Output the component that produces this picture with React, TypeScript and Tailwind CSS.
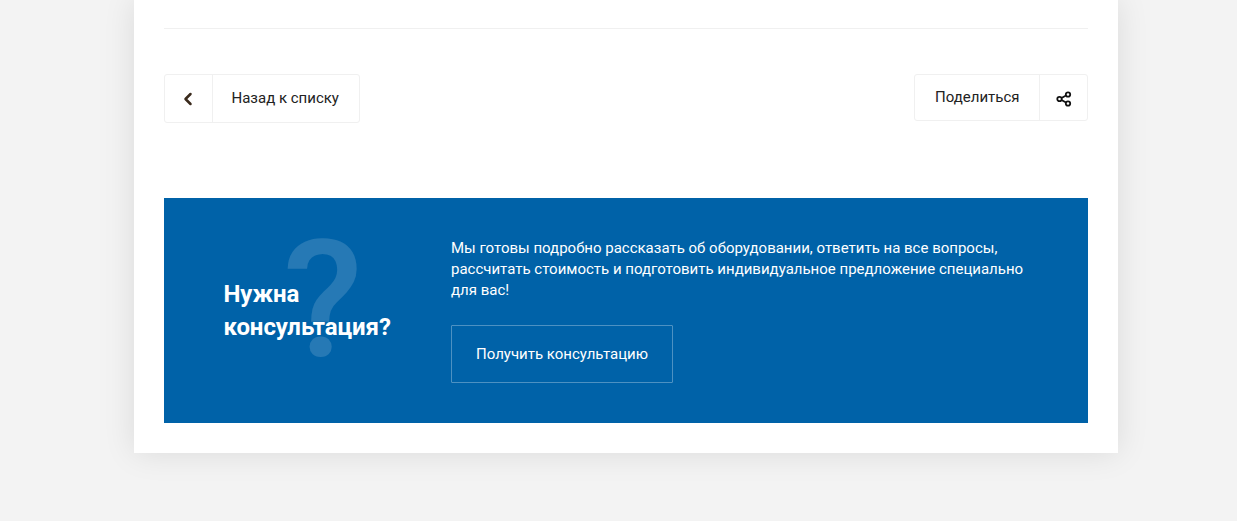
import { ChevronLeft } from "lucide-react";

const ShareIcon = () => (
  <svg className="mt-[3px]" width="16" height="16" viewBox="0 0 16 16" fill="none" stroke="#111" strokeWidth="1.8">
    <circle cx="12" cy="3.5" r="2.2" />
    <circle cx="3.5" cy="8" r="2.2" />
    <circle cx="12" cy="12.5" r="2.2" />
    <path d="M5.5 7 10 4.5M5.5 9 10 11.5" />
  </svg>
);

export default function App() {
  return (
    <div className="min-h-[521px] bg-[#f3f3f3] font-['Roboto',sans-serif] overflow-hidden">
      <div className="ml-[134px] w-[984px] bg-white px-[30px] pt-[28px] pb-[30px] shadow-[0_0_30px_rgba(0,0,0,0.1)]">
        <div className="border-t border-[#f0f0f0]" />

        <div className="mt-[45px] flex items-start justify-between">
          <a className="flex h-[49px] w-[196px] rounded-[3px] border border-[#f0f0f0] text-[#222]">
            <span className="flex w-[48px] items-center justify-center border-r border-[#f0f0f0] pr-[1px]">
              <ChevronLeft size={20} strokeWidth={3} color="#3a2a1c" />
            </span>
            <span className="flex flex-1 items-center pl-[18.5px] text-[15px]">Назад к списку</span>
          </a>
          <a className="flex h-[47px] w-[174px] rounded-[3px] border border-[#f0f0f0] text-[#222]">
            <span className="flex flex-1 items-center pl-[20px] text-[15px]">Поделиться</span>
            <span className="flex w-[48px] items-center justify-center border-l border-[#f0f0f0]">
              <ShareIcon />
            </span>
          </a>
        </div>

        <div className="relative mt-[75px] flex h-[225px] overflow-hidden bg-[#0062a8] text-white">
          <span className="absolute left-[119px] top-[4px] text-[164px] leading-[1.2] font-medium text-white/15">?</span>
          <div className="relative flex w-[287px] items-center pl-[59.5px]">
            <h3 className="text-[24px] leading-[33px] font-bold tracking-[-0.003em]">
              Нужна
              <br />
              консультация?
            </h3>
          </div>
          <div className="relative w-[590px] pt-[40px]">
            <p className="text-[15px] leading-[21px]">
              Мы готовы подробно рассказать об оборудовании, ответить на все вопросы, рассчитать стоимость и подготовить индивидуальное предложение специально для вас!
            </p>
            <a className="mt-[24px] flex h-[58px] w-[222px] items-center justify-center rounded-[1px] border border-white/30 text-[15px]">
              Получить консультацию
            </a>
          </div>
        </div>
      </div>
    </div>
  );
}
